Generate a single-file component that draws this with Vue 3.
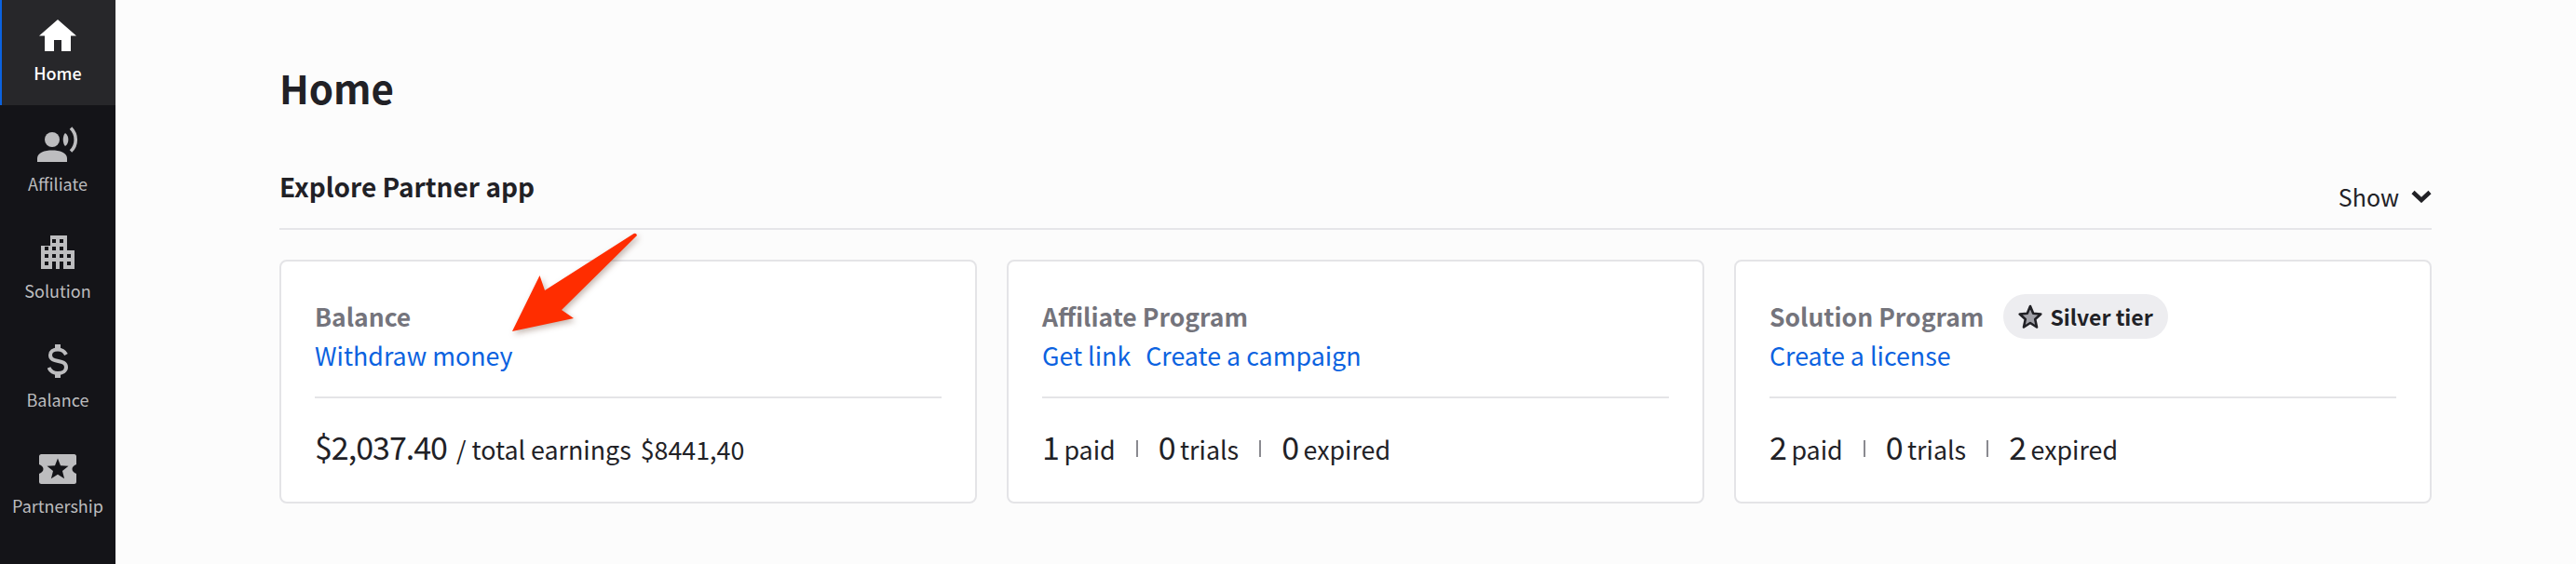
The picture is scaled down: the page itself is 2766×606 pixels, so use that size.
<script setup>
const solutionWindows = [
  [36, 12], [60, 12],
  [12, 36], [36, 36], [60, 36],
  [12, 60], [36, 60], [60, 60], [84, 60],
  [12, 84], [84, 84]
]
const stats = {
  affiliate: [['1', 'paid'], ['0', 'trials'], ['0', 'expired']],
  solution: [['2', 'paid'], ['0', 'trials'], ['2', 'expired']]
}
</script>

<template>
  <div class="page">
    <nav class="sidebar">
      <a class="nav-item active">
        <svg class="ic" width="40" height="34" viewBox="0 0 40 34"><path fill="#fff" d="M20 0 40 17.5H34V34H24V22H16V34H6V17.5H0Z" /></svg>
        <span>Home</span>
      </a>
      <a class="nav-item">
        <svg class="ic" width="44" height="38" viewBox="0 0 44 38">
          <circle cx="16" cy="14" r="8" fill="#bdbdbf" />
          <path fill="#bdbdbf" d="M0 38v-4c0-6 8-8.5 16-8.5s16 2.5 16 8.5v4Z" />
          <path fill="#bdbdbf" d="M30 7c4.5 3 4.5 11 0 14-3-3-3-11 0-14Z" />
          <path fill="none" stroke="#bdbdbf" stroke-width="3.6" d="M36 1.5c7 7 7 18.5 0 25" />
        </svg>
        <span>Affiliate</span>
      </a>
      <a class="nav-item">
        <svg class="ic" width="36" height="36" viewBox="0 0 108 108">
          <path fill="#bdbdbf" d="M30 0H84V48H108V108H72V84H36V108H0V33H30Z" />
          <rect v-for="w in solutionWindows" :key="w.join()" :x="w[0]" :y="w[1]" width="12" height="12" fill="#141418" />
          <rect x="48" y="84" width="12" height="24" fill="#bdbdbf" />
        </svg>
        <span>Solution</span>
      </a>
      <a class="nav-item">
        <svg class="ic" width="22" height="36" viewBox="0 0 22 36">
          <rect x="8" y="0" width="6" height="6" fill="#bdbdbf" />
          <rect x="8" y="30" width="6" height="6" fill="#bdbdbf" />
          <path fill="none" stroke="#bdbdbf" stroke-width="4" d="M20 11C18 7 15 5.5 11 5.5 6 5.5 3 8 3 11.5 3 21 20 15 20 24.5 20 28.5 16 31 11 31 6 31 3 29 1.5 25" />
        </svg>
        <span>Balance</span>
      </a>
      <a class="nav-item">
        <svg class="ic" width="40" height="32" viewBox="0 0 40 32">
          <path fill="#bdbdbf" d="M2.5 0H37.5Q40 0 40 2.5V11Q35.5 13 35.5 16T40 21V29.5Q40 32 37.5 32H2.5Q0 32 0 29.5V21Q4.5 19 4.5 16T0 11V2.5Q0 0 2.5 0Z" />
          <path fill="#141418" d="M20 4.5 23 12.3 31.5 12.8 25 18.1 27.1 26.3 20 21.8 12.9 26.3 15 18.1 8.5 12.8 17 12.3Z" />
        </svg>
        <span>Partnership</span>
      </a>
    </nav>

    <main class="main">
      <h1 class="title">Home</h1>
      <header class="section-head">
        <h2 class="section-title">Explore Partner app</h2>
        <button class="toggle">
          <span>Show</span>
          <svg width="22" height="14" viewBox="0 0 22 14"><path fill="none" stroke="#212126" stroke-width="4.5" d="M2 2.5 11 11 20 2.5" /></svg>
        </button>
      </header>

      <section class="cards">
        <article class="card">
          <h3 class="card-title">Balance</h3>
          <div class="links"><a>Withdraw money</a></div>
          <div class="card-foot">
            <span class="num amount">$2,037.40</span>
            <span class="total">/ total earnings</span>
            <span class="total">$8441,40</span>
          </div>
        </article>

        <article class="card">
          <h3 class="card-title">Affiliate Program</h3>
          <div class="links"><a>Get link</a><a>Create a campaign</a></div>
          <div class="card-foot stats">
            <template v-for="(s, i) in stats.affiliate" :key="s[1]">
              <i v-if="i" class="sep"></i>
              <span class="stat"><span class="num">{{ s[0] }}</span> {{ s[1] }}</span>
            </template>
          </div>
        </article>

        <article class="card">
          <div class="title-row">
            <h3 class="card-title">Solution Program</h3>
            <span class="badge">
              <svg width="26" height="27" viewBox="0 0 26 27"><path fill="#a1a1a8" stroke="#212126" stroke-width="2.6" stroke-linejoin="round" d="M13 2 16.2 9.8 24.3 10.5 18.2 16 20 24.5 13 20 6 24.5 7.8 16 1.7 10.5 9.8 9.8Z" /></svg>
              Silver tier
            </span>
          </div>
          <div class="links"><a>Create a license</a></div>
          <div class="card-foot stats">
            <template v-for="(s, i) in stats.solution" :key="s[1]">
              <i v-if="i" class="sep"></i>
              <span class="stat"><span class="num">{{ s[0] }}</span> {{ s[1] }}</span>
            </template>
          </div>
        </article>
      </section>
    </main>

    <svg class="arrow" width="150" height="125" viewBox="0 0 150 125">
      <path fill="#ff2d00" d="M16 106 45.5 46 51 62 145 2Q149 -1 150 3L69 83 82 92Z" />
    </svg>
  </div>
</template>

<style>
html, body { margin: 0; background: #fcfcfc; }
</style>

<style scoped>
.page {
  position: relative;
  display: flex;
  width: 2766px;
  height: 606px;
  overflow: hidden;
  background: #fcfcfc;
  color: #212126;
  font-family: "Noto Sans CJK SC", "Noto Sans", sans-serif;
}
.sidebar {
  flex: 0 0 124px;
  display: flex;
  flex-direction: column;
  gap: 3.5px;
  background: #141418;
}
.nav-item {
  box-sizing: border-box;
  height: 113px;
  display: flex;
  flex-direction: column;
  align-items: center;
  justify-content: center;
  gap: 9px;
  color: #bdbdbf;
  font-size: 18px;
  line-height: 28px;
}
.nav-item.active {
  background: #27272a;
  border-left: 2px solid #0b62e0;
  color: #fff;
  padding-right: 2px;
  font-weight: 500;
}
.ic { display: block; }
.main {
  flex: 1;
  box-sizing: border-box;
  padding: 64px 155px 0 176px;
}
.title {
  margin: 0;
  font-size: 42px;
  line-height: 60px;
  font-weight: 600;
}
.section-head {
  display: flex;
  justify-content: space-between;
  align-items: flex-end;
  margin-top: 46px;
  height: 75px;
  border-bottom: 2px solid #e6e6e9;
}
.section-title {
  margin: 0 0 25px;
  font-size: 28px;
  line-height: 40px;
  font-weight: 600;
}
.toggle {
  display: flex;
  align-items: center;
  gap: 13px;
  padding: 0;
  margin-bottom: 16px;
  border: 0;
  background: none;
  color: inherit;
  font: inherit;
  font-size: 25px;
  line-height: 36px;
}
.cards {
  display: grid;
  grid-template-columns: repeat(3, 1fr);
  gap: 32px;
  margin-top: 32px;
}
.card {
  box-sizing: border-box;
  height: 262px;
  padding: 39px 36px 0;
  background: #fff;
  border: 2px solid #e4e4e7;
  border-radius: 8px;
}
.title-row {
  display: flex;
  align-items: center;
  gap: 21px;
  height: 40px;
}
.card-title {
  margin: 0;
  height: 40px;
  color: #74747c;
  font-size: 26.5px;
  line-height: 40px;
  font-weight: 600;
}
.badge {
  flex: none;
  display: flex;
  align-items: center;
  gap: 8px;
  height: 48px;
  padding: 0 16px;
  border-radius: 24px;
  background: #ededf0;
  color: #212126;
  font-size: 23px;
  line-height: 48px;
  font-weight: 600;
}
.links {
  display: flex;
  gap: 16px;
  height: 44px;
  color: #0b62e0;
  font-size: 26.8px;
  line-height: 44px;
}
.card-foot {
  display: flex;
  align-items: baseline;
  gap: 10px;
  margin-top: 22px;
  padding-top: 29px;
  border-top: 2px solid #e4e4e7;
  font-size: 26.8px;
  line-height: 46px;
}
.num { font-size: 34px; }
.amount { letter-spacing: -1px; }
.stat { word-spacing: -1.5px; }
.stats { gap: 22px; align-items: baseline; }
.sep {
  align-self: center;
  width: 2px;
  height: 18px;
  background: #8a8a90;
}
.arrow {
  position: absolute;
  left: 534px;
  top: 250px;
  overflow: visible;
  filter: drop-shadow(2px 3px 3px rgba(90, 50, 30, 0.35));
}
</style>
